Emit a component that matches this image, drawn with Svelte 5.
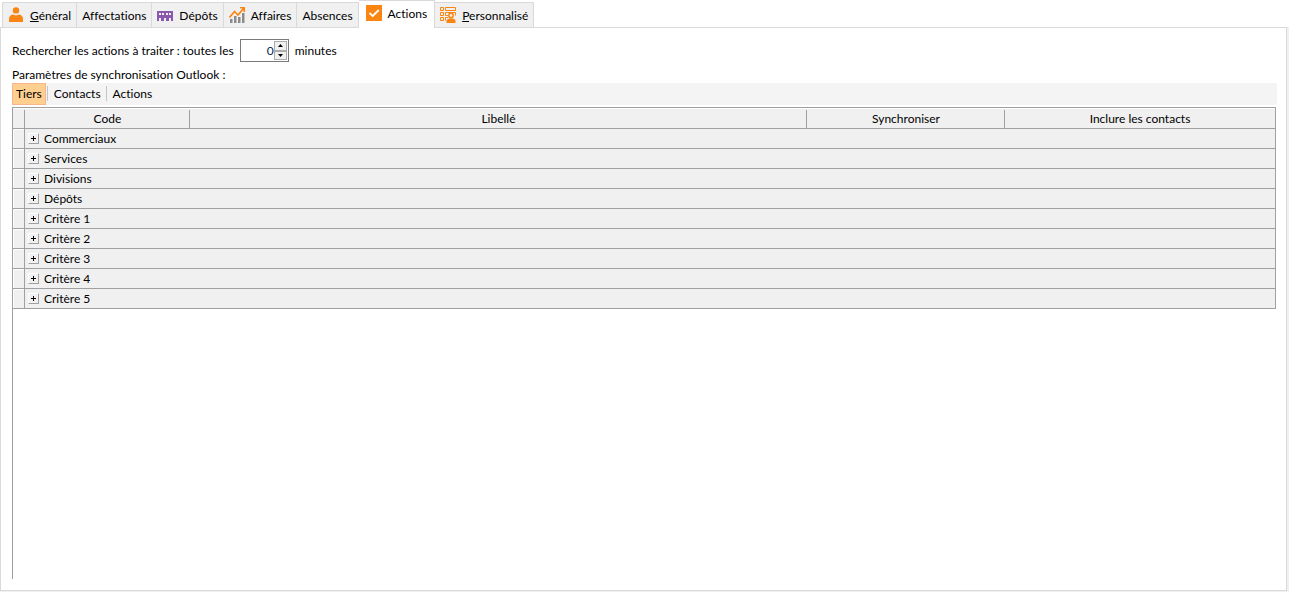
<script lang="ts">
  type Tab = { id: string; label: string; accel?: boolean; icon?: string };

  const tabs: Tab[] = [
    { id: 'general', label: 'Général', accel: true, icon: 'user' },
    { id: 'affectations', label: 'Affectations' },
    { id: 'depots', label: 'Dépôts', icon: 'depot' },
    { id: 'affaires', label: 'Affaires', icon: 'chart' },
    { id: 'absences', label: 'Absences' },
    { id: 'actions', label: 'Actions', icon: 'check' },
    { id: 'personnalise', label: 'Personnalisé', accel: true, icon: 'custom' }
  ];

  const views = ['Tiers', 'Contacts', 'Actions'];

  const groups = [
    'Commerciaux',
    'Services',
    'Divisions',
    'Dépôts',
    'Critère 1',
    'Critère 2',
    'Critère 3',
    'Critère 4',
    'Critère 5'
  ];

  let activeTab = $state('actions');
  let activeView = $state('Tiers');
  let minutes = $state(0);
  let expanded: Record<string, boolean> = $state({});

  function step(delta: number) {
    minutes = Math.max(0, Number(minutes) + delta);
  }
</script>

{#snippet icon(name: string)}
  <svg class="icon" viewBox="0 0 16 16" aria-hidden="true">
    {#if name === 'user'}
      <circle cx="8" cy="3.4" r="3.2" fill="#fa8512" />
      <path d="M1 15V12C1 9.500 2.500 8 5 7.500L8 8.500L11 7.500C13.500 8 15 9.500 15 12V15Z" fill="#fa8512" />
    {:else if name === 'depot'}
      <path
        d="M0 4H16V14H14V11H12V14H9V11H7V14H4V11H2V14H0ZM2 6V8H4V6ZM5 6V8H7V6ZM9 6V8H11V6ZM12 6V8H14V6Z"
        fill="#8a58ae"
        fill-rule="evenodd"
      />
    {:else if name === 'chart'}
      <path d="M1 12H3.500V16H1ZM5 9H7.500V16H5ZM9 10H11.500V16H9ZM13 6H15.500V16H13Z" fill="#8c8c8c" />
      <path d="M0.500 10.500L5.500 4.500L9 8L14.500 1.500M11 0.800H15.200V5" fill="none" stroke="#fa8512" stroke-width="1.600" />
    {:else if name === 'check'}
      <path d="M0 0H16V16H0Z" fill="#fa8512" />
      <path d="M3.500 8L6.700 11L12.800 5" fill="none" stroke="#fff" stroke-width="1.800" />
    {:else}
      <g fill="none" stroke="#fa8512">
        <path d="M0.500 0.500H3.500V3.500H0.500ZM5.500 0.500H15.500V3.500H5.500ZM0.500 5.500H3.500V8.500H0.500ZM0.500 10.500H3.500V13.500H0.500Z" />
        <path d="M15.500 8.500V5.500H5.500V8.500H8M8 10.500H5.500V13.500" />
      </g>
      <circle cx="11" cy="8.500" r="2.200" fill="#f0f0f0" stroke="#fa8512" stroke-width="1.500" />
      <path d="M6.500 16V14C6.500 12.500 8 11.700 9.500 11.500H12.500C14 11.700 15.500 12.500 15.500 14V16Z" fill="#fa8512" />
    {/if}
  </svg>
{/snippet}

<div class="page">
  <div class="tabs" role="tablist">
    {#each tabs as tab (tab.id)}
      <button
        class="tab"
        class:active={activeTab === tab.id}
        role="tab"
        aria-selected={activeTab === tab.id}
        onclick={() => (activeTab = tab.id)}
      >
        {#if tab.icon}
          {@render icon(tab.icon)}
        {/if}
        {#if tab.accel}
          <span><u>{tab.label[0]}</u>{tab.label.slice(1)}</span>
        {:else}
          <span>{tab.label}</span>
        {/if}
      </button>
    {/each}
  </div>

  <main class="pane">
    <div class="interval">
      <label for="minutes">Rechercher les actions à traiter : toutes les</label>
      <div class="spinner">
        <input id="minutes" type="text" inputmode="numeric" bind:value={minutes} />
        <div class="steps">
          <button aria-label="Augmenter" onclick={() => step(1)}>
            <svg viewBox="0 0 5 3"><path d="M0 3L2.500 0L5 3Z" /></svg>
          </button>
          <button aria-label="Diminuer" onclick={() => step(-1)}>
            <svg viewBox="0 0 5 3"><path d="M0 0L2.500 3L5 0Z" /></svg>
          </button>
        </div>
      </div>
      <span>minutes</span>
    </div>

    <div class="caption">Paramètres de synchronisation Outlook :</div>

    <div class="toolbar">
      {#each views as view}
        <button class:selected={activeView === view} onclick={() => (activeView = view)}>{view}</button>
      {/each}
    </div>

    <div class="grid">
      <table>
        <colgroup>
          <col class="col-mark" />
          <col class="col-code" />
          <col />
          <col class="col-sync" />
          <col class="col-include" />
        </colgroup>
        <thead>
          <tr>
            <th></th>
            <th>Code</th>
            <th>Libellé</th>
            <th>Synchroniser</th>
            <th>Inclure les contacts</th>
          </tr>
        </thead>
        <tbody>
          {#each groups as group}
            <tr>
              <td class="mark"></td>
              <td colspan="4">
                <div class="group">
                  <button
                    class="toggle"
                    aria-label={group}
                    aria-expanded={!!expanded[group]}
                    onclick={() => (expanded[group] = !expanded[group])}
                  >
                    <svg viewBox="0 0 5 5">
                      <path d={expanded[group] ? 'M0 2H5V3H0Z' : 'M0 2H2V0H3V2H5V3H3V5H2V3H0Z'} />
                    </svg>
                  </button>
                  <span>{group}</span>
                </div>
              </td>
            </tr>
          {/each}
        </tbody>
      </table>
    </div>
  </main>
</div>

<style>
  :global(body) {
    margin: 0;
    background: #f0f0f0;
  }

  .page {
    display: flex;
    flex-direction: column;
    box-sizing: border-box;
    min-height: 100vh;
    padding: 0 2px 1px 0;
    font-family: 'Segoe UI', Lato, 'Open Sans', sans-serif;
    font-size: 12px;
    font-variant-ligatures: none;
    line-height: 16px;
    color: #000;
    background: linear-gradient(#fff 27px, #f0f0f0 27px);
  }

  button,
  input {
    margin: 0;
    padding: 0;
    border: 0;
    border-radius: 0;
    font: inherit;
    font-variant-ligatures: none;
    color: inherit;
    background: none;
  }

  .tabs {
    display: flex;
    align-items: flex-end;
    height: 27px;
    padding-left: 2px;
  }

  .tab {
    display: flex;
    align-items: center;
    gap: 6px;
    height: 25px;
    padding: 0 5px;
    border: solid #d9d9d9;
    border-width: 1px 1px 0 0;
    white-space: nowrap;
    background: #f0f0f0;
  }

  .tab:first-child {
    border-left-width: 1px;
  }

  .tab span {
    margin-top: 2px;
  }

  .tab.active {
    z-index: 1;
    height: 28px;
    margin-bottom: -1px;
    padding: 0 7px 3px;
    background: #fff;
  }

  .icon {
    width: 16px;
    height: 16px;
  }

  .pane {
    display: flex;
    flex: 1;
    flex-direction: column;
    padding: 11px 9px 11px 11px;
    border: 1px solid #d9d9d9;
    background: #fff;
  }

  .interval {
    display: flex;
    align-items: center;
    gap: 6px;
  }

  .spinner {
    display: flex;
    box-sizing: border-box;
    width: 49px;
    height: 23px;
    padding: 1px;
    border: 1px solid #7a7a7a;
    background: #fff;
  }

  .spinner input {
    flex: 1;
    min-width: 0;
    text-align: right;
    color: #00285a;
    outline: none;
  }

  .steps {
    display: flex;
    flex-direction: column;
    width: 13px;
  }

  .steps button {
    display: flex;
    flex: 1;
    align-items: center;
    justify-content: center;
    border: 1px solid #acacac;
    background: #f0f0f0;
  }

  .steps svg {
    width: 5px;
    height: 3px;
  }

  .caption {
    margin-top: 5px;
  }

  .toolbar {
    display: flex;
    align-items: center;
    height: 22px;
    background: #f4f4f4;
  }

  .toolbar button {
    height: 22px;
    padding: 0 3px;
    border: 1px solid transparent;
  }

  .toolbar button.selected {
    border-color: #f8b48c;
    background: #ffcf90;
  }

  .toolbar button + button {
    position: relative;
    margin-left: 4px;
  }

  .toolbar button + button::before {
    position: absolute;
    top: 2px;
    left: -4px;
    width: 1px;
    height: 15px;
    background: #c5c5c5;
    content: '';
  }

  .grid {
    flex: 1;
    margin: 2px 1px 0 0;
    border-left: 1px solid #a0a0a0;
  }

  table {
    width: 100%;
    border-spacing: 0;
    table-layout: fixed;
    border-right: 1px solid #a0a0a0;
    background: #f0f0f0;
  }

  .col-mark {
    width: 12px;
  }

  .col-code {
    width: 165px;
  }

  .col-sync {
    width: 198px;
  }

  .col-include {
    width: 270px;
  }

  th {
    height: 18px;
    padding: 2px 0 0;
    border-top: 1px solid #a0a0a0;
    border-bottom: 1px solid #a0a0a0;
    font-weight: normal;
    box-shadow: inset 0 1px #fff;
    background: linear-gradient(#a0a0a0, #a0a0a0) right bottom / 1px 18px no-repeat;
  }

  th:last-child {
    background: none;
  }

  td {
    height: 19px;
    padding: 0;
    border-bottom: 1px solid #a0a0a0;
  }

  .mark {
    border-right: 1px solid #a0a0a0;
    box-shadow: inset 1px 1px #fff;
  }

  .group {
    display: flex;
    align-items: center;
    gap: 5px;
    padding-left: 3px;
  }

  .toggle {
    display: flex;
    align-items: center;
    justify-content: center;
    box-sizing: border-box;
    width: 11px;
    height: 11px;
    border: 1px solid;
    border-color: #fff #a0a0a0 #a0a0a0 #fff;
  }

  .toggle svg {
    width: 5px;
    height: 5px;
  }
</style>
